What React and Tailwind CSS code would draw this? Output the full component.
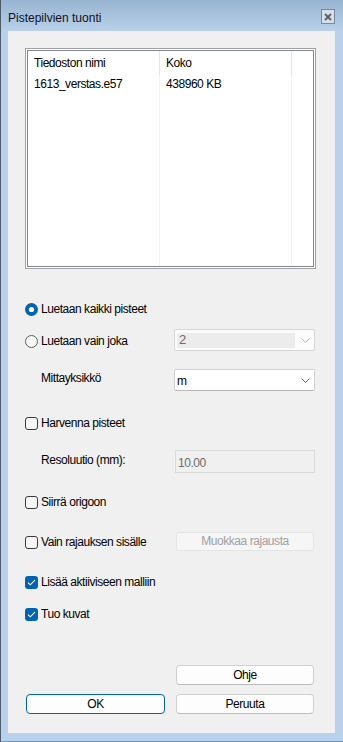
import React from 'react';

const Chevron = ({ disabled }) => (
  <svg width="9" height="5" viewBox="0 0 9 5" className="shrink-0">
    <path d="M0.5 0.5 L4.5 4.5 L8.5 0.5" fill="none" stroke={disabled ? '#b4b4b4' : '#5c5c5c'} strokeWidth="1" />
  </svg>
);

const Radio = ({ checked, label }) => (
  <div className="h-[20px] flex items-center gap-[3px]">
    {checked ? (
      <svg width="13" height="13" viewBox="0 0 13 13" className="shrink-0">
        <circle cx="6.5" cy="6.5" r="6.5" fill="#0063b1" />
        <circle cx="6.5" cy="6.5" r="2.6" fill="#ffffff" />
      </svg>
    ) : (
      <svg width="13" height="13" viewBox="0 0 13 13" className="shrink-0">
        <circle cx="6.5" cy="6.5" r="6" fill="#f7f7f7" stroke="#5e5e5e" strokeWidth="1" />
      </svg>
    )}
    <span>{label}</span>
  </div>
);

const Check = ({ checked, label }) => (
  <div className="h-[20px] flex items-center gap-[3px]">
    {checked ? (
      <div className="w-[13px] h-[13px] rounded-[3px] bg-[#0063b1] flex items-center justify-center shrink-0">
        <svg width="9" height="7" viewBox="0 0 9 7">
          <path d="M1 3.6 L3.3 5.8 L8 1.2" fill="none" stroke="#ffffff" strokeWidth="1.1" />
        </svg>
      </div>
    ) : (
      <div className="w-[13px] h-[13px] rounded-[3px] border border-[#3a3a3a] bg-[#f6f6f6] shrink-0" />
    )}
    <span>{label}</span>
  </div>
);

export default function App() {
  return (
    <div className="w-[343px] h-[742px] flex flex-col bg-[#b9d1ea] border-l border-l-[#4c5a6a] border-b border-b-[#33aee6] font-['Liberation_Sans',Arial,sans-serif] text-[12px] text-black tracking-[-0.45px] overflow-hidden">
      {/* Title bar */}
      <div className="h-[31px] shrink-0 flex items-start justify-between pl-[7px] pr-[8px] bg-gradient-to-b from-[#99b4d1] to-[#b9d1ea]">
        <span className="mt-[11px] text-[12px] tracking-normal leading-[14px] text-[#10101c]">Pistepilvien tuonti</span>
        <div className="mt-[9px] w-[14px] h-[15px] border border-[#7b8797] bg-[#d6dee8] flex items-center justify-center">
          <svg width="8" height="8" viewBox="0 0 8 8">
            <path d="M1 1 L7 7 M7 1 L1 7" stroke="#56606c" strokeWidth="1.8" />
          </svg>
        </div>
      </div>

      {/* Client area */}
      <div className="ml-[7px] w-[327px] h-[702px] shrink-0 bg-[#f0f0f0] pl-[17px] flex flex-col">
        {/* File list */}
        <div className="mt-[17px] w-[291px] h-[221px] shrink-0 border border-[#a0a0a0] bg-white p-px">
          <div className="h-full border border-[#828790] flex flex-col">
            <div className="h-[24px] flex shrink-0">
              <div className="w-[132px] pl-[6px] border-r border-[#e5e5e5] flex items-center">Tiedoston nimi</div>
              <div className="w-[132px] pl-[6px] border-r border-[#e5e5e5] flex items-center">Koko</div>
              <div className="flex-1" />
            </div>
            <div className="flex-1 flex">
              <div className="w-[132px] border-r border-[#eef3f9]">
                <div className="h-[17px] pl-[6px] flex items-center">1613_verstas.e57</div>
              </div>
              <div className="w-[132px] border-r border-[#eef3f9]">
                <div className="h-[17px] pl-[6px] flex items-center">438960 KB</div>
              </div>
              <div className="flex-1" />
            </div>
          </div>
        </div>

        <div className="mt-[30px]">
          <Radio checked label="Luetaan kaikki pisteet" />
        </div>

        <div className="mt-[10px] h-[22px] flex items-center">
          <div className="w-[149px] pt-[2px]">
            <Radio label="Luetaan vain joka" />
          </div>
          <div className="w-[141px] h-[22px] border border-[#d6d6d6] rounded-[2px] bg-[#fbfbfb] flex items-center pl-[2px] pr-[4px] gap-[6px]">
            <div className="flex-1 h-[15px] bg-[#ececec] pl-[2px] flex items-center text-[#6d6d6d] text-[13px]">2</div>
            <Chevron disabled />
          </div>
        </div>

        <div className="mt-[18px] h-[22px] flex items-start">
          <div className="w-[149px] pl-[16px] pt-[0px]">Mittayksikkö</div>
          <div className="w-[141px] h-[22px] border border-[#cfcfcf] border-b-[#b8b8b8] rounded-[2px] bg-white flex items-center justify-between pl-[2px] pr-[4px]">
            <span className="pt-[2px]">m</span>
            <Chevron />
          </div>
        </div>

        <div className="mt-[22px]">
          <Check label="Harvenna pisteet" />
        </div>

        <div className="mt-[17px] h-[23px] flex items-start">
          <div className="w-[150px] pl-[16px] pt-[1px]">Resoluutio (mm):</div>
          <div className="w-[140px] h-[23px] border border-[#dadada] bg-[#f0f0f0] pl-[2px] pt-[3px] text-[#6d6d6d]">10.00</div>
        </div>

        <div className="mt-[19px]">
          <Check label="Siirrä origoon" />
        </div>

        <div className="mt-[19px] h-[20px] flex items-center">
          <div className="w-[151px] pt-[2px]">
            <Check label="Vain rajauksen sisälle" />
          </div>
          <div className="w-[138px] h-[19px] border border-[#e4e4e4] rounded-[3px] bg-[#f6f6f6] flex items-center justify-center text-[#a0a0a0]">
            Muokkaa rajausta
          </div>
        </div>

        <div className="mt-[21px]">
          <Check checked label="Lisää aktiiviseen malliin" />
        </div>

        <div className="mt-[12px]">
          <Check checked label="Tuo kuvat" />
        </div>

        <div className="mt-[41px] h-[20px] flex">
          <div className="w-[151px]" />
          <div className="w-[138px] h-[20px] border border-[#d0d0d0] border-b-[#bcbcbc] rounded-[4px] bg-[#fdfdfd] flex items-center justify-center">
            Ohje
          </div>
        </div>

        <div className="mt-[9px] h-[20px] flex">
          <div className="ml-[1px] w-[139px] h-[20px] border border-[#0063b1] rounded-[4px] bg-[#fdfdfd] flex items-center justify-center">
            OK
          </div>
          <div className="ml-[11px] w-[138px] h-[20px] border border-[#d0d0d0] border-b-[#bcbcbc] rounded-[4px] bg-[#fdfdfd] flex items-center justify-center">
            Peruuta
          </div>
        </div>
      </div>
    </div>
  );
}
